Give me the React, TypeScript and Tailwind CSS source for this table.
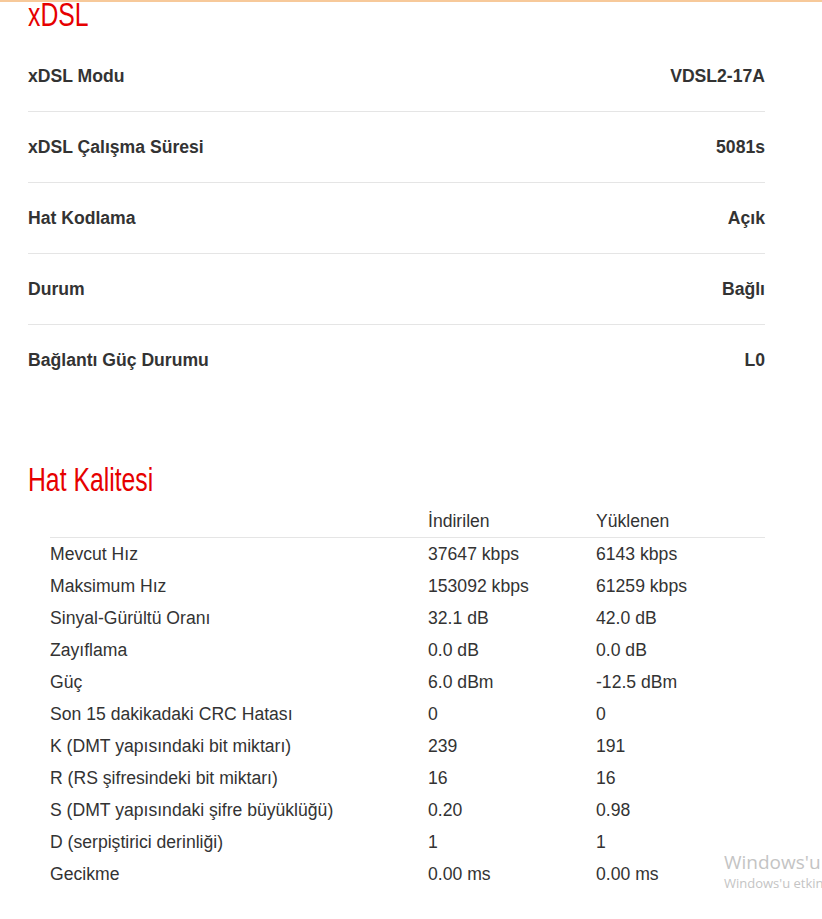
import React from "react";

const statusRows = [
  { label: "xDSL Modu", value: "VDSL2-17A" },
  { label: "xDSL Çalışma Süresi", value: "5081s" },
  { label: "Hat Kodlama", value: "Açık" },
  { label: "Durum", value: "Bağlı" },
  { label: "Bağlantı Güç Durumu", value: "L0" },
];

const qualityRows = [
  ["Mevcut Hız", "37647 kbps", "6143 kbps"],
  ["Maksimum Hız", "153092 kbps", "61259 kbps"],
  ["Sinyal-Gürültü Oranı", "32.1 dB", "42.0 dB"],
  ["Zayıflama", "0.0 dB", "0.0 dB"],
  ["Güç", "6.0 dBm", "-12.5 dBm"],
  ["Son 15 dakikadaki CRC Hatası", "0", "0"],
  ["K (DMT yapısındaki bit miktarı)", "239", "191"],
  ["R (RS şifresindeki bit miktarı)", "16", "16"],
  ["S (DMT yapısındaki şifre büyüklüğü)", "0.20", "0.98"],
  ["D (serpiştirici derinliği)", "1", "1"],
  ["Gecikme", "0.00 ms", "0.00 ms"],
];

// narrow brand-like heading: no condensed face available, so squeeze Liberation Sans
const titleCls =
  "inline-block origin-left scale-x-[0.75] font-['Liberation_Sans',Arial,sans-serif] text-[33px] leading-[33px] text-[#e60000]";

export default function App() {
  return (
    <div className="relative h-[919px] overflow-hidden bg-white border-t-2 border-[#f7c99a] font-['Liberation_Sans',Arial,sans-serif] text-[#333]">
      <div className="pl-[28px] pr-[57px]">
        <div className="-mt-[4px] mb-[10px] h-[33px]">
          <h1 className={titleCls}>xDSL</h1>
        </div>

        <div>
          {statusRows.map((row, i) => (
            <div
              key={row.label}
              className={`flex items-center justify-between text-[17.6px] font-bold ${
                i < statusRows.length - 1 ? "h-[71px] border-b border-[#e5e5e5]" : "h-[70px]"
              }`}
            >
              <span>{row.label}</span>
              <span>{row.value}</span>
            </div>
          ))}
        </div>

        <div className="mt-[68px] mb-[9px] h-[33px]">
          <h2 className={titleCls}>Hat Kalitesi</h2>
        </div>

        <div className="ml-[22px] text-[17.6px]">
          <div className="flex h-[33px] items-center border-b border-[#e5e5e5]">
            <span className="w-[378px]" />
            <span className="w-[168px]">İndirilen</span>
            <span>Yüklenen</span>
          </div>
          {qualityRows.map(([label, down, up]) => (
            <div key={label} className="flex h-[32px] items-center">
              <span className="w-[378px]">{label}</span>
              <span className="w-[168px]">{down}</span>
              <span>{up}</span>
            </div>
          ))}
        </div>
      </div>

      {/* activation watermark */}
      <div className="absolute left-[724px] top-[848px] whitespace-nowrap font-['Open_Sans',sans-serif] text-[#c4c4c4]">
        <div className="text-[19px] leading-[24px]">Windows'u etkinleştir</div>
        <div className="text-[13px] leading-[18px]">Windows'u etkinleştirmek için Ayarlar'a gidin.</div>
      </div>
    </div>
  );
}
